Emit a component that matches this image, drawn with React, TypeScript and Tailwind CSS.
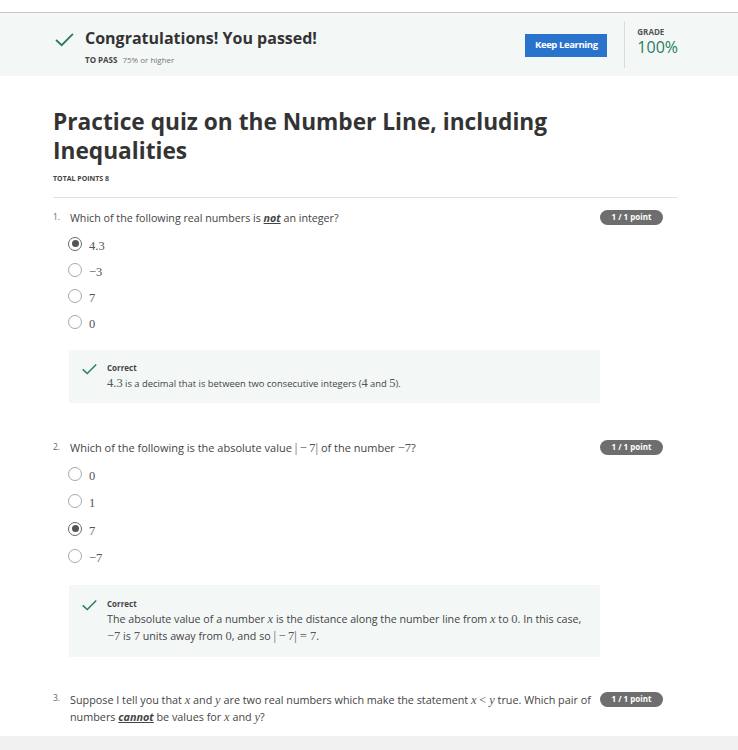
import React from 'react';

function Check({ className }: { className?: string }) {
  return (
    <svg viewBox="0 0 20 16" className={className} fill="none" stroke="currentColor" strokeWidth={2}>
      <path d="M1 8.5 L7 14 L19 2" />
    </svg>
  );
}

// KaTeX-ish math bits
function M({ children }: { children: React.ReactNode }) {
  return <span className="font-[Liberation_Serif,serif] text-[12.5px] leading-none text-[#555]">{children}</span>;
}

function I({ children }: { children: React.ReactNode }) {
  return <span className="font-[Liberation_Serif,serif] italic text-[12.5px] leading-none text-[#555]">{children}</span>;
}

function Radio({ checked }: { checked?: boolean }) {
  return (
    <span
      className={`w-[14px] h-[14px] rounded-full border flex items-center justify-center bg-white ${
        checked ? 'border-[#6a6a6a] border-[1.5px]' : 'border-[#a8a8a8]'
      }`}
    >
      {checked && <span className="w-[7px] h-[7px] rounded-full bg-[#555]" />}
    </span>
  );
}

function Badge() {
  return (
    <span className="h-[15px] w-[63px] rounded-full bg-[#6e6e6e] text-white text-[8px] font-bold flex items-center justify-center shrink-0">
      1 / 1 point
    </span>
  );
}

function Option({ label, checked, tall }: { label: React.ReactNode; checked?: boolean; tall?: boolean }) {
  return (
    <div className={`flex items-center gap-[7px] ${tall ? 'h-[27.4px]' : 'h-[26px]'}`}>
      <Radio checked={checked} />
      <span>{label}</span>
    </div>
  );
}

function Feedback({ children, size, py }: { children: React.ReactNode; size: string; py: string }) {
  return (
    <div className={`ml-[16px] w-[531px] bg-[#f3f8f7] flex pl-[13px] pr-[14px] ${py} gap-[10px]`}>
      <Check className="w-[15px] h-[12px] text-[#2a7c5b] mt-[2px] shrink-0" />
      <div>
        <div className="text-[8px] font-bold text-[#444] leading-[14px]">Correct</div>
        <div className={`${size} text-[#444] leading-[17px]`}>{children}</div>
      </div>
    </div>
  );
}

export default function App() {
  return (
    <div className="w-[738px] h-[750px] bg-white flex flex-col overflow-hidden font-[Open_Sans,Noto_Sans,sans-serif]">
      <div className="h-[12px] shrink-0" />
      {/* banner */}
      <div className="h-[64px] shrink-0 border-t border-[#c8c8c8] bg-[#f3f8f7] flex items-start">
        <Check className="w-[19px] h-[15px] text-[#2a7c5b] ml-[55px] mt-[19px]" />
        <div className="ml-[11px] mt-[13px]">
          <div className="text-[16px] font-bold text-[#333] leading-[24px]">Congratulations! You passed!</div>
          <div className="text-[8px] mt-[4px] text-[#777]">
            <span className="font-bold text-[#444] mr-[5px]">TO PASS</span>75% or higher
          </div>
        </div>
        <div className="flex-1" />
        <button className="mt-[21px] h-[23px] w-[82px] bg-[#2a73cc] text-white text-[9.5px] font-bold tracking-[-0.4px]">
          Keep Learning
        </button>
        <div className="ml-[17px] mt-[8px] h-[47px] border-l border-[#dadada]" />
        <div className="ml-[12px] mt-[14px]">
          <div className="text-[8px] font-bold text-[#555] leading-[10px]">GRADE</div>
          <div className="text-[16px] text-[#2a7c5b] leading-[20px]">100%</div>
        </div>
        <div className="w-[60px]" />
      </div>

      {/* content */}
      <div className="pl-[53px] w-[663px] flex-1">
        <h1 className="mt-[31px] text-[22.7px] font-bold text-[#333] leading-[29px] w-[560px]">
          Practice quiz on the Number Line, including Inequalities
        </h1>
        <div className="mt-[9px] text-[7px] font-bold text-[#444]">TOTAL POINTS 8</div>
        <div className="mt-[12px] w-[624px] border-t border-[#e0e0e0]" />

        {/* Q1 */}
        <div className="mt-[12px] flex items-start text-[10.7px] text-[#444]">
          <span className="w-[17px] text-[8.5px] text-[#666] mt-[1px]">1.</span>
          <span className="flex-1">
            Which of the following real numbers is <b className="italic underline">not</b> an integer?
          </span>
          <Badge />
        </div>
        <div className="mt-[5px] ml-[15px]">
          <Option label={<M>4.3</M>} checked />
          <Option label={<M>−3</M>} />
          <Option label={<M>7</M>} />
          <Option label={<M>0</M>} />
        </div>
        <div className="mt-[15px]">
          <Feedback size="text-[9.4px]" py="py-[11px]">
            <M>4.3</M> is a decimal that is between two consecutive integers (<M>4</M> and <M>5</M>).
          </Feedback>
        </div>

        {/* Q2 */}
        <div className="mt-[37px] flex items-start text-[11px] text-[#444]">
          <span className="w-[17px] text-[8.5px] text-[#666] mt-[1px]">2.</span>
          <span className="flex-1">
            Which of the following is the absolute value <M>|&thinsp;−&thinsp;7|</M> of the number <M>−7</M>?
          </span>
          <Badge />
        </div>
        <div className="mt-[4px] ml-[15px]">
          <Option label={<M>0</M>} tall />
          <Option label={<M>1</M>} tall />
          <Option label={<M>7</M>} checked tall />
          <Option label={<M>−7</M>} tall />
        </div>
        <div className="mt-[15px]">
          <Feedback size="text-[10.7px]" py="py-[12px]">
            The absolute value of a number <I>x</I> is the distance along the number line from <I>x</I> to <M>0</M>. In this case,
            <br />
            <M>−7</M> is <M>7</M> units away from <M>0</M>, and so <M>|&thinsp;−&thinsp;7| = 7</M>.
          </Feedback>
        </div>

        {/* Q3 */}
        <div className="mt-[34px] flex items-start text-[10.8px] text-[#444]">
          <span className="w-[17px] text-[8.5px] text-[#666] mt-[1px]">3.</span>
          <span className="flex-1 leading-[17px]">
            Suppose I tell you that <I>x</I> and <I>y</I> are two real numbers which make the statement <I>x</I> <M>&lt;</M> <I>y</I> true. Which pair of
            <br />
            numbers <b className="italic underline">cannot</b> be values for <I>x</I> and <I>y</I>?
          </span>
          <span className="mt-[1px]"><Badge /></span>
        </div>
      </div>
      <div className="h-[14px] shrink-0 bg-[#f0f0f0]" />
    </div>
  );
}
